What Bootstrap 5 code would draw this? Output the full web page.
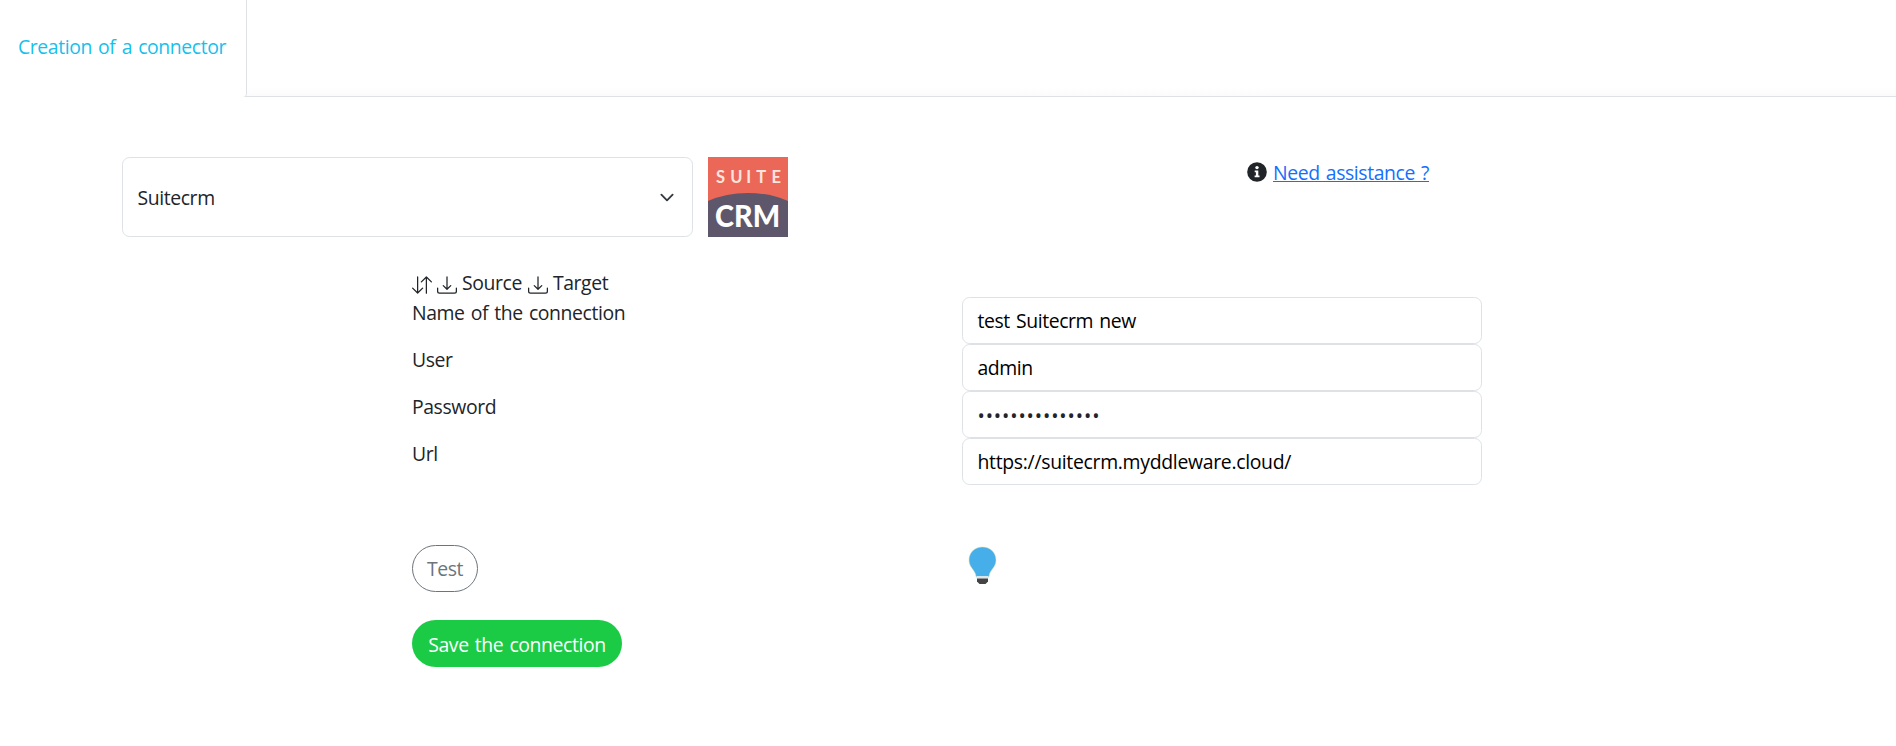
<!DOCTYPE html>
<html lang="en">
<head>
<meta charset="utf-8">
<title>Creation of a connector</title>
<link href="https://cdn.jsdelivr.net/npm/bootstrap@5.3.0/dist/css/bootstrap.min.css" rel="stylesheet">
<style>
  html { font-size: 20px; }
  body { font-family: "Open Sans", "Noto Sans", sans-serif; background: #fff; overflow: hidden; }
  .txt, .form-control, .form-select, .btn { font-size: 19.4px; line-height: 30px; letter-spacing: -.4px; word-spacing: 1.5px; }
  .tab-bar { height: 97px; border-bottom: 1px solid #dee2e6; background: linear-gradient(#fff 90%, #fbfbfc); }
  .tab-active { width: 247px; height: 97px; padding: 32px 0 0 18px; color: #17bfec; background: #fff; border-right: 1px solid #dee2e6; border-bottom-right-radius: 4px; }
  .page { width: 1650px; margin-left: 122px; padding-top: 60px; }
  .form-control, .form-select { border-color: #dee2e6; background-color: #fff; }
  .form-control { height: 47px; color: #000; padding-left: 14.5px; }
  .form-control.url { letter-spacing: -.3px; }
  .form-control.secret { letter-spacing: .9px; color: #212529; padding-top: 9px; }
  .form-select { width: 571px; height: 80px; background-size: 20px 15px; color: #212529; padding: 9px 45px 7px 14.5px; }
  .logo { margin-left: 15px; }
  .help { margin-left: 459px; }
  .help svg { margin: 5px 6px 0 0; }
  .help a { color: #146ffd; padding-top: 1px; }
  .connection { margin-top: 31px; }
  .source-line { height: 30px; padding-left: 15px; }
  .source-line svg { margin: 7px 5px 0 0; }
  .source-line span { margin-right: 6px; }
  .field-label { height: 47px; }
  .fields { margin-top: -1px; }
  .btn { height: 47px; border-radius: 24px; }
  .btn-outline-secondary { width: 66px; padding: 7px 0; }
  .btn-save, .btn-save:hover { background: #1ccb45; color: #fff; border: 0; width: 210px; padding: 2px 0 0; margin-top: 28px; }
  .actions { margin-top: 59px; }
  .bulb { margin-top: 1px; }
</style>
</head>
<body>
<nav class="tab-bar"><div class="tab-active txt">Creation of a connector</div></nav>
<main class="page">
  <div class="d-flex align-items-start">
    <select class="form-select"><option>Suitecrm</option></select>
    <svg class="logo flex-shrink-0" width="80" height="80" viewBox="0 0 80 80" font-family="Lato, sans-serif" fill="#fff">
      <path fill="#eb6858" d="M0 0h80v80H0z"/>
      <path fill="#5e566b" d="M0 44Q18 36 40 36T80 44V80H0z"/>
      <text x="8 22.300 38.300 48.300 63.500" y="25.500" font-size="16.500" font-weight="700" fill="#fde4df">SUITE</text>
      <text x="7" y="69.500" font-size="29.500" font-weight="900" textLength="65" lengthAdjust="spacingAndGlyphs">CRM</text>
    </svg>
    <div class="help d-flex txt">
      <svg width="20" height="20" viewBox="0 0 20 20"><circle cx="10" cy="10" r="9.8" fill="#212529"/><circle cx="10" cy="5.6" r="1.7" fill="#fff"/><path d="M7.700 8.500h3.600v5h1.200v1.800H7.600v-1.800h1.300v-3.200H7.700z" fill="#fff"/></svg>
      <a href="#">Need assistance ?</a>
    </div>
  </div>
  <section class="row mx-0 connection">
    <div class="col-8 offset-2 p-0">
      <div class="d-flex txt source-line">
        <svg width="20" height="20" viewBox="0 0 16 16" fill="#212529"><path d="M11.500 15a.5.5 0 0 0 .5-.5V2.707l3.146 3.147a.5.5 0 0 0 .708-.708l-4-4a.5.5 0 0 0-.708 0l-4 4a.5.5 0 1 0 .708.708L11 2.707V14.500a.5.5 0 0 0 .5.5m-7-14a.5.5 0 0 1 .5.5v11.793l3.146-3.147a.5.5 0 0 1 .708.708l-4 4a.5.5 0 0 1-.708 0l-4-4a.5.5 0 0 1 .708-.708L4 13.293V1.500a.5.5 0 0 1 .5-.5"/></svg>
        <svg width="20" height="20" viewBox="0 0 16 16" fill="#212529"><path id="dl" d="M.5 9.900a.5.5 0 0 1 .5.5v2.500a1 1 0 0 0 1 1h12a1 1 0 0 0 1-1v-2.500a.5.5 0 0 1 1 0v2.500a2 2 0 0 1-2 2H2a2 2 0 0 1-2-2v-2.500a.5.5 0 0 1 .5-.5M7.646 11.854a.5.5 0 0 0 .708 0l3-3a.5.5 0 0 0-.708-.708L8.500 10.293V1.500a.5.5 0 0 0-1 0v8.793L5.354 8.146a.5.5 0 1 0-.708.708z"/></svg>
        <span>Source</span>
        <svg width="20" height="20" viewBox="0 0 16 16" fill="#212529"><use href="#dl"/></svg>
        <span>Target</span>
      </div>
      <div class="row mx-0">
        <div class="col-6 txt">
          <div class="field-label">Name of the connection</div>
          <div class="field-label">User</div>
          <div class="field-label">Password</div>
          <div class="field-label">Url</div>
        </div>
        <div class="col-6 fields">
          <input class="form-control" value="test Suitecrm new">
          <input class="form-control" value="admin">
          <input class="form-control secret" type="password" value="abcdefghijklmno">
          <input class="form-control url" value="https://suitecrm.myddleware.cloud/">
        </div>
      </div>
      <div class="row mx-0 actions">
        <div class="col-6 d-flex flex-column align-items-start">
          <button class="btn btn-outline-secondary">Test</button>
          <button class="btn btn-save">Save the connection</button>
        </div>
        <div class="col-6">
          <svg class="bulb" width="40" height="40" viewBox="0 0 40 40"><path d="M20.500 1C12.500 1 7 6.800 7 14c0 6.500 4.500 9 6.500 14l.7 3h12.600l.7-3C29.500 23 34 20.500 34 14 34 6.800 28.500 1 20.500 1z" fill="#46aee9" stroke="#d8dfa8" stroke-width=".5"/><path d="M14.500 30h12v2.500h-12z" fill="#d9e6ea"/><path d="M15 32.500h11v3L23.500 38h-6L15 35.500z" fill="#444"/></svg>
        </div>
      </div>
    </div>
  </section>
</main>
<script src="https://cdn.jsdelivr.net/npm/bootstrap@5.3.0/dist/js/bootstrap.bundle.min.js"></script>
</body>
</html>
